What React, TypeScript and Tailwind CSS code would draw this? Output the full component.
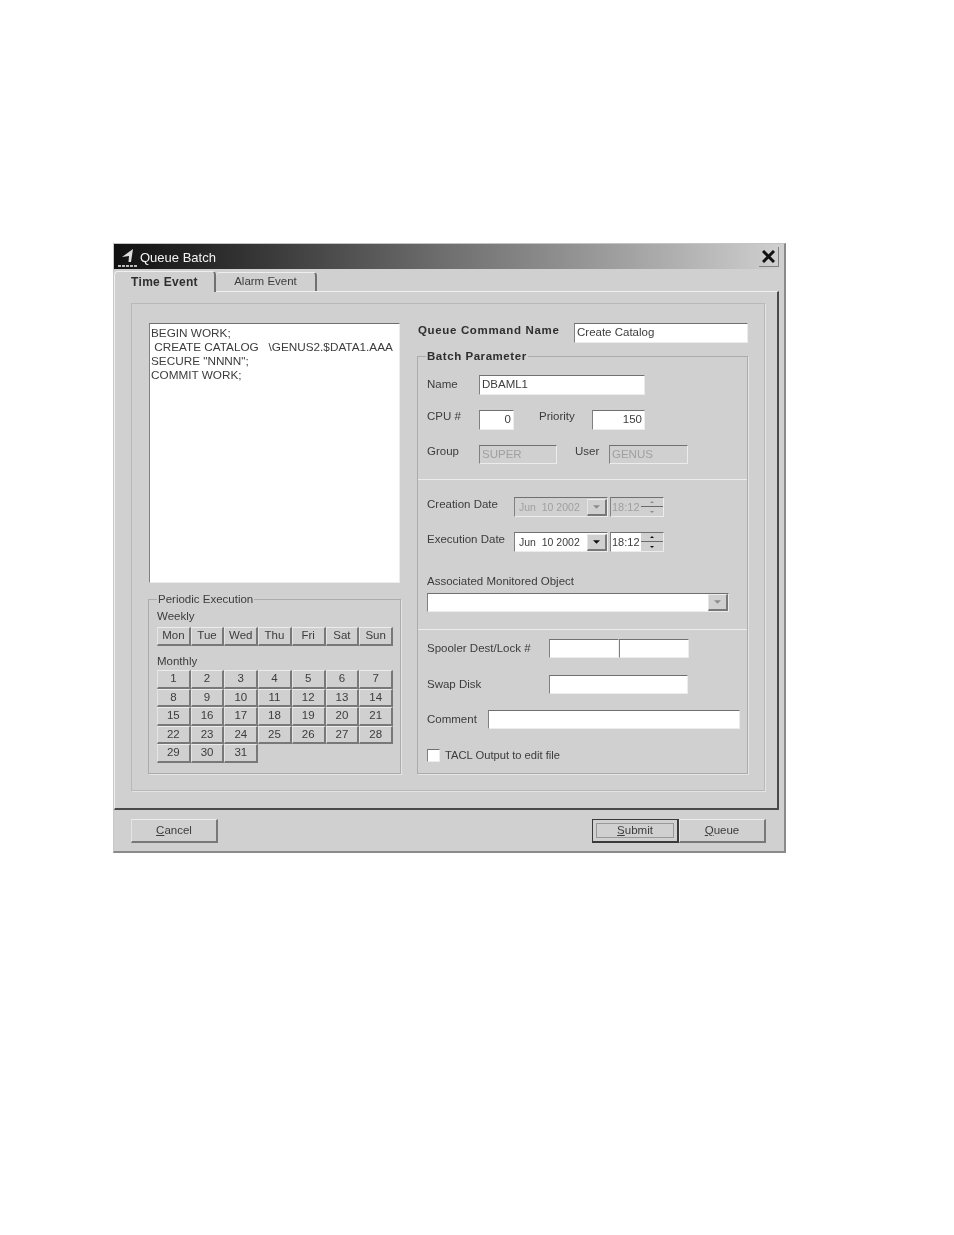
const sunken = "border-t border-l border-t-[#707070] border-l-[#808080] border-b border-r border-b-[#ececec] border-r-[#ececec]";
const raised = "border-t border-l border-t-[#ececec] border-l-[#e4e4e4] border-b-2 border-r-2 border-b-[#787878] border-r-[#787878]";

const Field = ({ w, value, right, disabled, className = "" }: { w: string; value?: string; right?: boolean; disabled?: boolean; className?: string }) => (
  <div className={`${w} h-full shrink-0 pl-[2px] flex items-center ${sunken} ${disabled ? "bg-[#d0d0d0] text-[#a0a0a0]" : "bg-white"} ${right ? "justify-end pr-[2px]" : "pr-[2px]"} ${className}`}>
    {value}
  </div>
);

const Triangle = ({ color = "#111", flip = false, size = 7 }: { color?: string; flip?: boolean; size?: number }) => (
  <svg width={size} height={Math.ceil(size / 2)} viewBox="0 0 8 4">
    <path d={flip ? "M0 4 L4 0 L8 4 Z" : "M0 0 L8 0 L4 4 Z"} fill={color} />
  </svg>
);

const DateRow = ({ label, disabled }: { label: string; disabled?: boolean }) => {
  const arrow = disabled ? "#8c8c8c" : "#111";
  return (
    <div className="flex h-[20px]">
      <div className="w-[87px] -mt-[5px] flex items-center">{label}</div>
      <div className={`w-[94px] h-full flex items-center ${sunken} ${disabled ? "bg-[#d0d0d0] text-[#a0a0a0]" : "bg-white"}`}>
        <span className="pl-[4px] flex-1 whitespace-nowrap text-[10.5px]">Jun&nbsp; 10 2002</span>
        <div className={`w-[20px] h-[17px] bg-[#d0d0d0] flex items-center justify-center ${raised}`}>
          <Triangle color={arrow} />
        </div>
      </div>
      <div className={`ml-[2px] w-[54px] h-full flex items-center ${sunken} ${disabled ? "bg-[#d0d0d0] text-[#a0a0a0]" : "bg-white"}`}>
        <span className="pl-[1px] w-[30px] text-[11px]">18:12</span>
        <div className="flex-1 h-full flex flex-col bg-[#d0d0d0]">
          <div className="h-1/2 flex items-center justify-center border-b border-[#6a6a6a]"><Triangle color={arrow} flip size={4} /></div>
          <div className="h-1/2 flex items-center justify-center"><Triangle color={arrow} size={4} /></div>
        </div>
      </div>
    </div>
  );
};

const weekly = ["Mon", "Tue", "Wed", "Thu", "Fri", "Sat", "Sun"];
const monthly = Array.from({ length: 31 }, (_, i) => String(i + 1));

const DayButton = ({ label }: { label: string }) => (
  <div className={`h-full flex items-center justify-center bg-[#d0d0d0] ${raised}`}>{label}</div>
);

const App = () => {
  return (
    <div className="w-[954px] h-[1235px] bg-white pt-[243px] pl-[113px] overflow-hidden">
      <div
        className="w-[673px] h-[610px] bg-[#d0d0d0] border-t border-t-[#c4c4c4] border-r-2 border-b-2 border-r-[#8a8a8a] border-b-[#8a8a8a] border-l border-l-[#c8c8c8] text-[#3c3c3c] text-[11.5px] leading-none blur-[0.7px]"
        style={{ fontFamily: '"Liberation Sans", Arial, sans-serif' }}
      >
        {/* Title bar */}
        <div className="h-[25px] flex items-center bg-gradient-to-r from-[#111111] via-[#707070] to-[#d0d0d0] pl-[3px] pr-[5px]">
          <svg width="22" height="22" viewBox="0 0 22 22">
            <path d="M5 11 L16 3 L14 16 L11.5 16 L12 10 Z" fill="#dedede" />
            <path d="M1 20 H21" stroke="#bbbbbb" strokeWidth="2" strokeDasharray="3 1" />
          </svg>
          <span className="ml-px mt-[2px] text-[#f4f4f4] text-[13px]">Queue Batch</span>
          <div className="ml-auto w-[20px] h-[20px] flex items-center justify-center border-b border-r border-[#808080]">
            <svg width="13" height="13" viewBox="0 0 13 13">
              <path d="M1 1 L12 12 M12 1 L1 12" stroke="#111" strokeWidth="3" />
            </svg>
          </div>
        </div>

        {/* Tabs */}
        <div className="h-[22px] flex items-end relative z-10">
          <div className="w-[102px] h-[21px] -mb-px bg-[#d0d0d0] rounded-t-[4px] border-t border-l border-t-[#efefef] border-l-[#efefef] border-r-2 border-r-[#707070] flex items-center justify-center font-bold text-[12px] tracking-[0.3px] text-[#2e2e2e]">
            Time Event
          </div>
          <div className="w-[101px] h-[19px] rounded-t-[4px] border-t border-t-[#efefef] border-r-2 border-r-[#707070] flex items-center justify-center">
            Alarm Event
          </div>
        </div>

        {/* Tab page */}
        <div className="w-[665px] h-[519px] pt-[11px] pl-[16px] border-t border-l border-t-[#efefef] border-l-[#efefef] border-r-2 border-b-2 border-r-[#4a4a4a] border-b-[#4a4a4a]">
          <div className="w-[634px] h-[488px] pt-[19px] pl-[16px] border border-[#b8b8b8] shadow-[1px_1px_0_#e4e4e4] flex">
            {/* Left column */}
            <div className="w-[253px]">
              <div className={`ml-px w-[251px] h-[260px] bg-white px-px pt-[2px] text-[11.75px] leading-[14px] whitespace-pre ${sunken}`}>
                {"BEGIN WORK;\n CREATE CATALOG   \\GENUS2.$DATA1.AAA\nSECURE \"NNNN\";\nCOMMIT WORK;"}
              </div>
              <div className="relative mt-[16px] h-[175px] pl-[8px] border border-[#acacac] shadow-[1px_1px_0_#e4e4e4]">
                <span className="absolute -top-[6px] left-[8px] px-[1px] bg-[#d0d0d0]">Periodic Execution</span>
                <div className="h-[27px] flex items-end pb-[5px]">Weekly</div>
                <div className="w-[236px] h-[19px] grid grid-cols-7">
                  {weekly.map((d) => (
                    <DayButton key={d} label={d} />
                  ))}
                </div>
                <div className="h-[24px] flex items-end pb-[3px]">Monthly</div>
                <div className="w-[236px] h-[93px] grid grid-cols-7 grid-rows-5">
                  {monthly.map((d) => (
                    <DayButton key={d} label={d} />
                  ))}
                </div>
              </div>
            </div>

            {/* Right column */}
            <div className="ml-[16px] w-[331px]">
              <div className="h-[20px] flex">
                <div className="w-[157px] pl-px -mt-[4px] flex items-center font-bold tracking-[0.65px] whitespace-nowrap text-[#2e2e2e]">Queue Command Name</div>
                <Field w="w-[174px]" value="Create Catalog" />
              </div>

              <div className="relative mt-[13px] h-[418px] border border-[#acacac] shadow-[1px_1px_0_#e4e4e4]">
                <span className="absolute -top-[6px] left-[8px] px-[1px] bg-[#d0d0d0] font-bold tracking-[0.55px] text-[#2e2e2e]">Batch Parameter</span>

                <div className="h-[122px] pt-[18px] pl-[9px]">
                  <div className="h-[20px] flex items-center">
                    <span className="w-[52px]">Name</span>
                    <Field w="w-[166px]" value="DBAML1" />
                  </div>
                  <div className="mt-[15px] h-[20px] flex">
                    <span className="w-[52px] -mt-[7px] flex items-center">CPU #</span>
                    <Field w="w-[35px]" value="0" right />
                    <span className="ml-[25px] w-[53px] -mt-[7px] flex items-center">Priority</span>
                    <Field w="w-[53px]" value="150" right />
                  </div>
                  <div className="mt-[15px] h-[19px] flex">
                    <span className="w-[52px] -mt-[5px] flex items-center">Group</span>
                    <Field w="w-[78px]" value="SUPER" disabled />
                    <span className="ml-[18px] w-[34px] -mt-[5px] flex items-center">User</span>
                    <Field w="w-[79px]" value="GENUS" disabled />
                  </div>
                </div>

                <div className="h-[150px] pt-[17px] pl-[9px] border-t border-t-[#ececec]">
                  <DateRow label="Creation Date" disabled />
                  <div className="mt-[15px]">
                    <DateRow label="Execution Date" />
                  </div>
                  <div className="mt-[24px] h-[16px]">Associated Monitored Object</div>
                  <div className={`w-[302px] h-[19px] mt-[1px] bg-white flex justify-end ${sunken}`}>
                    <div className={`w-[20px] h-full bg-[#d0d0d0] flex items-center justify-center ${raised}`}>
                      <Triangle color="#8c8c8c" />
                    </div>
                  </div>
                </div>

                <div className="h-[144px] pt-[9px] pl-[9px] border-t border-t-[#ececec]">
                  <div className="h-[19px] flex items-center">
                    <span className="w-[122px] whitespace-nowrap">Spooler Dest/Lock #</span>
                    <Field w="w-[70px]" />
                    <Field w="w-[70px]" />
                  </div>
                  <div className="mt-[17px] h-[19px] flex items-center">
                    <span className="w-[122px]">Swap Disk</span>
                    <Field w="w-[139px]" />
                  </div>
                  <div className="mt-[16px] h-[19px] flex items-center">
                    <span className="w-[61px]">Comment</span>
                    <Field w="w-[252px]" />
                  </div>
                  <div className="mt-[20px] h-[13px] flex items-center">
                    <div className={`w-[13px] h-[13px] bg-white ${sunken}`} />
                    <span className="ml-[5px] whitespace-nowrap text-[11.2px]">TACL Output to edit file</span>
                  </div>
                </div>
              </div>
            </div>
          </div>
        </div>

        {/* Dialog buttons */}
        <div className="mt-[9px] pl-[17px] flex">
          <div className={`w-[87px] h-[24px] flex items-center justify-center ${raised}`}>
            <span><span className="underline">C</span>ancel</span>
          </div>
          <div className="ml-[374px] w-[87px] h-[24px] p-[3px] border border-[#3a3a3a] border-r-2 border-b-2 flex">
            <div className="flex-1 flex items-center justify-center border border-[#989898]">
              <span><span className="underline">S</span>ubmit</span>
            </div>
          </div>
          <div className={`w-[87px] h-[24px] flex items-center justify-center ${raised}`}>
            <span><span className="underline">Q</span>ueue</span>
          </div>
        </div>
      </div>
    </div>
  );
};

export default App;
